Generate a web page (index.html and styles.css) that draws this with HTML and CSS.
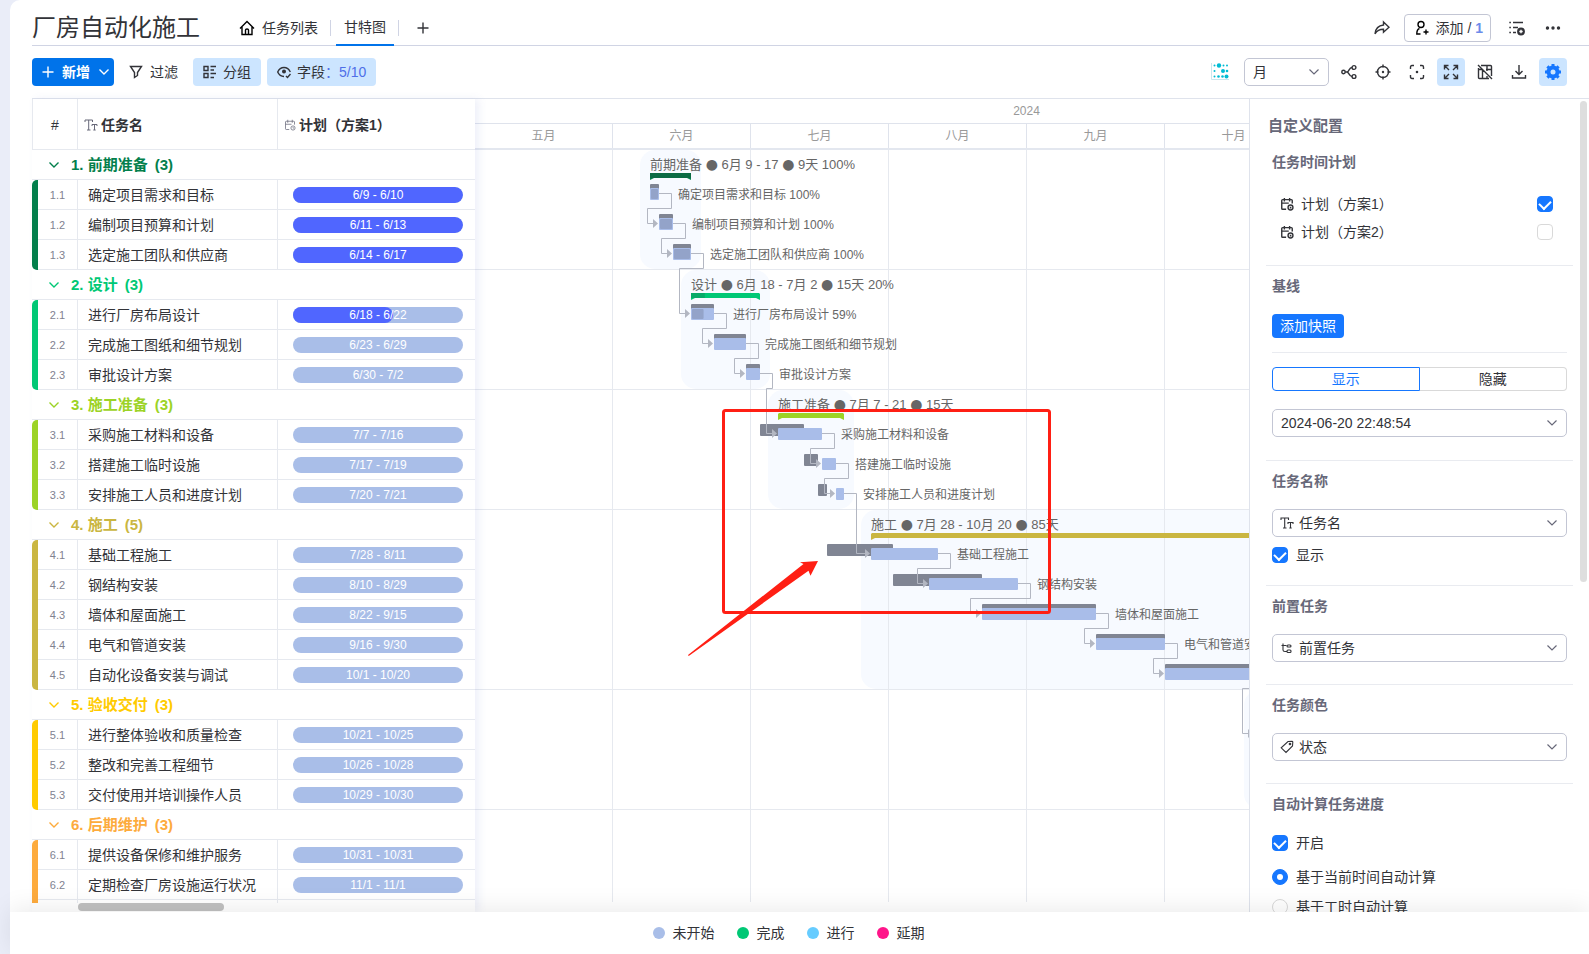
FILE: index.html
```html
<!DOCTYPE html>
<html lang="zh-CN">
<head>
<meta charset="utf-8">
<title>厂房自动化施工</title>
<link rel="stylesheet" href="styles.css">
</head>
<body>
<svg class="sprite" aria-hidden="true">
  <symbol id="i-calendar" viewBox="0 0 16 16"><path d="M7 14H3a1 1 0 0 1-1-1V4a1 1 0 0 1 1-1h10a1 1 0 0 1 1 1v3.500M2 7h8M5 1v4M11 1v4"/><circle cx="12" cy="12" r="2.800"/><path d="M12 11v1.200h1"/></symbol>
  <symbol id="i-chevron" viewBox="0 0 12 12"><path d="M1.500 3.500 6 8l4.500-4.500"/></symbol>
  <symbol id="i-text" viewBox="0 0 14 14"><path d="M1 4V2h7.500v2M4.700 2v10M3 12h3.500M8 8V6.500h5V8M10.500 6.500V12M9.300 12h2.400"/></symbol>
  <symbol id="i-plus" viewBox="0 0 12 12"><path d="M6 .5v11M.5 6h11"/></symbol>
</svg>
<div class="app">
  <header class="topbar">
    <h1 class="title">厂房自动化施工</h1>
    <nav class="tabs">
      <a class="tab" href="#list"><svg class="icon i16 dark" viewBox="0 0 16 16"><path d="M1 8.500 8 1.500l7 7M3 7v7.500h10V7M6.500 14.500V10q0-1 1.500-1t1.500 1v4.500"/></svg>任务列表</a>
      <span class="sep"></span>
      <a class="tab active" href="#gantt">甘特图</a>
      <span class="sep"></span>
      <button class="plain add-tab" aria-label="添加视图"><svg class="icon i12" ><use href="#i-plus"/></svg></button>
    </nav>
    <div class="top-actions">
      <button class="plain" aria-label="分享"><svg class="icon i16" viewBox="0 0 16 16"><path d="M9.500 2 15 7.200l-5.500 5V9.300C5.500 9.300 3 10.500 1 13.800 1.500 9 4.500 5.500 9.500 5z"/></svg></button>
      <button class="invite"><svg class="icon i16 dark" viewBox="0 0 16 16"><circle cx="7" cy="4.500" r="3"/><path d="M5.500 8.500C3.500 9 2.800 11 2.800 14H6.500M12 9.500v5M9.500 12h5"/></svg><span>添加 / <b>1</b></span></button>
      <button class="plain" aria-label="活动"><svg class="icon i16" viewBox="0 0 16 16"><path d="M4 2.500h10M4 7.500h5M4 12.500h3M.3 2.500h1.600M.3 7.500h1.600M.3 12.500h1.600"/><circle class="solid" cx="12" cy="11.500" r="3.200"/><path class="cut" d="M12 9.800v3.400M10.300 11.500h3.400"/></svg></button>
      <button class="plain" aria-label="更多"><svg class="icon i16" viewBox="0 0 16 16"><g class="solid"><circle cx="2.500" cy="8" r="1"/><circle cx="8" cy="8" r="1"/><circle cx="13.500" cy="8" r="1"/></g></svg></button>
    </div>
  </header>

  <div class="toolbar">
    <button class="btn primary"><svg class="icon i12"><use href="#i-plus"/></svg><b>新增</b><svg class="icon i12"><use href="#i-chevron"/></svg></button>
    <button class="btn filter"><svg class="icon i14" viewBox="0 0 14 14"><path d="M1.500 1.500h11L8.500 7.500v3l-3 2v-5z"/></svg>过滤</button>
    <button class="btn soft"><svg class="icon i14" viewBox="0 0 14 14"><path d="M1 1.500h4v4H1zM1 8.500h4v4H1zM7.500 1.500H13M7.500 5H11M7.500 8.500H13M7.500 12.500H11"/></svg>分组</button>
    <button class="btn soft"><svg class="icon i14" viewBox="0 0 14 14"><path d="M7 11.500C4 11.500 1.800 9.500.7 7 1.800 4.500 4 2.500 7 2.500s5.200 2 6.300 4.500M9 11l1.500 1.500 3-3.500"/><circle class="solid" cx="7" cy="6.500" r="1.300"/></svg><span>字段<i class="blue">：5/10</i></span></button>
    <div class="tools">
      <button class="tool cyan" aria-label="网格"><svg viewBox="0 0 18 18"><path class="axis" d="M.5 0v16.500H18"/><g><circle cx="3.500" cy="2.500" r="1"/><circle cx="8" cy="2.500" r="2.200"/><circle cx="12.500" cy="2.500" r="1"/><circle cx="16" cy="2.500" r="1"/><circle cx="3.500" cy="8" r="1"/><circle cx="12" cy="8" r="2"/><circle cx="16" cy="8" r="1.300"/><circle cx="3.500" cy="13.500" r="1"/><circle cx="7.500" cy="13.500" r="1.300"/><circle cx="11.500" cy="13.500" r="1.300"/><circle cx="15.500" cy="13.500" r="2"/></g></svg></button>
      <span class="select month"><select aria-label="时间刻度"><option>月</option></select><svg class="icon i12 caret"><use href="#i-chevron"/></svg></span>
      <button class="tool" aria-label="依赖"><svg class="icon i16" viewBox="0 0 16 16"><circle cx="2.500" cy="8" r="1.700"/><circle cx="13" cy="3.500" r="1.900"/><circle cx="13" cy="12.500" r="1.900"/><path d="M4.200 8H6c2 0 2-4.500 5-4.500M6 8c2 0 2 4.500 5 4.500"/></svg></button>
      <button class="tool" aria-label="今天"><svg class="icon i16" viewBox="0 0 16 16"><circle cx="8" cy="8" r="5.500"/><path d="M8 .5v3M8 12.500v3M.5 8h3M12.500 8h3"/><circle class="solid" cx="8" cy="8" r=".5"/></svg></button>
      <button class="tool" aria-label="聚焦"><svg class="icon i16" viewBox="0 0 16 16"><path d="M1.500 5V3q0-1.500 1.500-1.500h2M11 1.500h2q1.500 0 1.500 1.500v2M14.500 11v2q0 1.500-1.500 1.500h-2M5 14.500H3q-1.500 0-1.500-1.500v-2"/><circle class="solid" cx="8" cy="8" r=".6"/></svg></button>
      <button class="tool on" aria-label="全屏"><svg class="icon i16" viewBox="0 0 16 16"><path d="M1.500 5.500v-4h4M1.500 1.500 6 6M10.500 1.500h4v4M14.500 1.500 10 6M14.500 10.500v4h-4M14.500 14.500 10 10M5.500 14.500h-4v-4M1.500 14.500 6 10"/></svg></button>
      <button class="tool" aria-label="隐藏表格"><svg class="icon i16" viewBox="0 0 16 16"><path d="M4 1.500h9.500q1 0 1 1V12M12 14.500H2.500q-1 0-1-1V4M1 1l14 14M5.500 5.500v9M1.500 5.500h4M9 5.500h5.500M10 1.500V7M10 12v2.500"/></svg></button>
      <button class="tool" aria-label="下载"><svg class="icon i16" viewBox="0 0 16 16"><path d="M8 1v9.500M4.500 7 8 10.500 11.500 7M1.500 11v3h13v-3"/></svg></button>
      <button class="tool on gear" aria-label="设置"><svg viewBox="0 0 18 18"><circle cx="9" cy="9" r="5" /><path d="M9 1v16M1 9h16M3.400 3.400l11.200 11.200M14.600 3.400 3.400 14.600"/><circle class="hole" cx="9" cy="9" r="2.500"/></svg></button>
    </div>
  </div>

  <main class="main">
    <section class="grid-pane">
      <div class="grid-clip">
        <table class="grid">
          <colgroup><col class="c-bar"><col class="c-num"><col class="c-name"><col></colgroup>
          <thead><tr>
            <th colspan="2" class="num-head">#</th>
            <th><span class="head"><svg class="icon i14 grey"><use href="#i-text"/></svg>任务名</span></th>
            <th><span class="head"><svg class="icon i12 grey"><use href="#i-calendar"/></svg>计划（方案1）</span></th>
          </tr></thead>
        </table>
      </div>
      <div class="hscroll"><span></span></div>
    </section>

    <section class="chart">
      <div class="scale">
        <div class="year">2024</div>
        <div class="months"><span>五月</span><span>六月</span><span>七月</span><span>八月</span><span>九月</span><span>十月</span><span></span><span></span></div>
      </div>
      <svg class="canvas" id="canvas"></svg>
    </section>

    <aside class="panel">
      <h2>自定义配置</h2>
      <section class="first">
        <h3>任务时间计划</h3>
        <label class="plan"><svg class="icon i14"><use href="#i-calendar"/></svg>计划（方案1）<input type="checkbox" checked></label>
        <label class="plan"><svg class="icon i14"><use href="#i-calendar"/></svg>计划（方案2）<input type="checkbox"></label>
      </section>
      <section class="baseline">
        <h3>基线</h3>
        <button class="snapshot">添加快照</button>
        <hr>
        <div class="segment"><button class="active">显示</button><button>隐藏</button></div>
        <span class="select"><select aria-label="快照"><option>2024-06-20 22:48:54</option></select><svg class="icon i12 caret"><use href="#i-chevron"/></svg></span>
      </section>
      <section>
        <h3>任务名称</h3>
        <span class="select lead"><svg class="icon i14 mark"><use href="#i-text"/></svg><select aria-label="任务名称"><option>任务名</option></select><svg class="icon i12 caret"><use href="#i-chevron"/></svg></span>
        <label class="check"><input type="checkbox" checked>显示</label>
      </section>
      <section>
        <h3>前置任务</h3>
        <span class="select lead"><svg class="icon i14 mark" viewBox="0 0 14 14"><path d="M3 2.500v6.500q0 1.500 2 1.500h2M1.500 4.500h5"/><rect x="7" y="4" width="4" height="2" rx="1"/><rect x="7" y="9" width="4" height="2.500" rx="1"/></svg><select aria-label="前置任务"><option>前置任务</option></select><svg class="icon i12 caret"><use href="#i-chevron"/></svg></span>
      </section>
      <section>
        <h3>任务颜色</h3>
        <span class="select lead"><svg class="icon i14 mark" viewBox="0 0 14 14"><path d="M8 1.500l4-.3q.8 0 .8.800l-.3 4L6 12.500 1.200 7.800z"/><circle cx="10" cy="4" r=".8"/></svg><select aria-label="任务颜色"><option>状态</option></select><svg class="icon i12 caret"><use href="#i-chevron"/></svg></span>
      </section>
      <section class="auto">
        <h3>自动计算任务进度</h3>
        <label class="check"><input type="checkbox" checked>开启</label>
        <label class="check"><input type="radio" name="mode" checked>基于当前时间自动计算</label>
        <label class="check"><input type="radio" name="mode">基于工时自动计算</label>
      </section>
      <span class="vscroll"></span>
    </aside>
  </main>

  <footer class="legend">
    <span><i class="todo"></i>未开始</span><span><i class="done"></i>完成</span><span><i class="doing"></i>进行</span><span><i class="late"></i>延期</span>
  </footer>
</div>
<script src="app.js"></script>
</body>
</html>
```
FILE: app.js
```js
// start/end: chart pixels of the task; b0/b1: baseline span when it differs
const groups = [
  { name: '前期准备', color: '#037f4c', dark: '#0b6b44', span: [175, 216], done: 1, title: '前期准备 ● 6月 9 - 17 ● 9天 100%', tasks: [
    { name: '确定项目需求和目标', plan: '6/9 - 6/10', start: 175, end: 184, done: 100 },
    { name: '编制项目预算和计划', plan: '6/11 - 6/13', start: 184, end: 198, done: 100 },
    { name: '选定施工团队和供应商', plan: '6/14 - 6/17', start: 198, end: 216, done: 100 } ] },
  { name: '设计', color: '#00c875', dark: '#08ab68', span: [216, 285], done: 0.2, title: '设计 ● 6月 18 - 7月 2 ● 15天 20%', tasks: [
    { name: '进行厂房布局设计', plan: '6/18 - 6/22', start: 216, end: 239, done: 59 },
    { name: '完成施工图纸和细节规划', plan: '6/23 - 6/29', start: 239, end: 271 },
    { name: '审批设计方案', plan: '6/30 - 7/2', start: 271, end: 285 } ] },
  { name: '施工准备', color: '#9cd326', span: [303, 369], title: '施工准备 ● 7月 7 - 21 ● 15天', tasks: [
    { name: '采购施工材料和设备', plan: '7/7 - 7/16', start: 303, end: 347, b0: 285, b1: 329 },
    { name: '搭建施工临时设施', plan: '7/17 - 7/19', start: 347, end: 361, b0: 329, b1: 343 },
    { name: '安排施工人员和进度计划', plan: '7/20 - 7/21', start: 361, end: 369, b0: 343, b1: 352 } ] },
  { name: '施工', color: '#cab641', span: [396, 779], title: '施工 ● 7月 28 - 10月 20 ● 85天', tasks: [
    { name: '基础工程施工', plan: '7/28 - 8/11', start: 396, end: 463, b0: 352, b1: 418 },
    { name: '钢结构安装', plan: '8/10 - 8/29', start: 454, end: 543, b0: 418, b1: 507 },
    { name: '墙体和屋面施工', plan: '8/22 - 9/15', start: 507, end: 621 },
    { name: '电气和管道安装', plan: '9/16 - 9/30', start: 621, end: 690 },
    { name: '自动化设备安装与调试', plan: '10/1 - 10/20', start: 690, end: 779 } ] },
  { name: '验收交付', color: '#ffcb00', span: [779, 823], tasks: [
    { name: '进行整体验收和质量检查', plan: '10/21 - 10/25', start: 779, end: 801 },
    { name: '整改和完善工程细节', plan: '10/26 - 10/28', start: 801, end: 815 },
    { name: '交付使用并培训操作人员', plan: '10/29 - 10/30', start: 815, end: 823 } ] },
  { name: '后期维护', color: '#fdab3d', span: [823, 832], tasks: [
    { name: '提供设备保修和维护服务', plan: '10/31 - 10/31', start: 823, end: 828 },
    { name: '定期检查厂房设施运行状况', plan: '11/1 - 11/1', start: 828, end: 832 },
    { start: 832, end: 836 } ] }
];
const ROW = 30;

const table = document.querySelector('.grid');
groups.forEach((g, gi) => {
  const body = document.createElement('tbody');
  body.style.color = g.color;
  let html = `<tr class="group"><td colspan="4"><span><svg class="icon i12"><use href="#i-chevron"/></svg>${gi + 1}. ${g.name}<em>(${g.tasks.length})</em></span></td></tr>`;
  g.tasks.forEach((t, ti) => {
    const bar = ti ? '' : `<td class="bar" rowspan="${g.tasks.length}"></td>`;
    html += t.name
      ? `<tr>${bar}<td class="num">${gi + 1}.${ti + 1}</td><td class="name">${t.name}</td><td class="when"><span class="pill"><i style="width:${t.done || 0}%"></i><b>${t.plan}</b></span></td></tr>`
      : `<tr>${bar}<td></td><td></td><td></td></tr>`;
  });
  body.innerHTML = html;
  table.append(body);
});

const CHART_END = 774; // tasks starting past this are outside the visible range
let under = '', shapes = '', links = '', labels = '', row = 0, prev = null;
groups.forEach(g => {
  const top = row * ROW, height = (g.tasks.length + 1) * ROW, [s, e] = g.span;
  under += `<rect class="zone" x="${s - 10}" y="${top}" width="${e - s + 20}" height="${height - 1}" rx="15"/>`;
  under += `<path class="line" d="M0 ${top + height - 0.5}H2000"/>`;
  if (g.title) labels += `<text class="summary" x="${s}" y="${top + 19}">${g.title.replace(/●/g, '<tspan class="dot">●</tspan>')}</text>`;
  const y = top + 23;
  shapes += `<path fill="${g.color}" d="M${s + 1} ${y}H${e - 1}l1 1v6l-4 -2H${s + 4}l-4 2v-6z"/>`;
  if (g.done) shapes += `<rect fill="${g.dark}" x="${s}" y="${y}" width="${(e - s) * g.done}" height="5"/>`;
  row++;
  g.tasks.forEach(t => {
    const ty = row * ROW, b0 = t.b0 ?? t.start, b1 = t.b1 ?? t.end;
    shapes += `<rect class="base" x="${b0}" y="${ty + 4}" width="${b1 - b0}" height="12" rx="1"/>`;
    shapes += `<rect class="task" x="${t.start}" y="${ty + 8}" width="${t.end - t.start}" height="12" rx="1"/>`;
    if (t.done) shapes += `<rect class="progress" x="${t.start + 1}" y="${ty + 9}" width="${(t.end - t.start) * t.done / 100 - 2}" height="10" rx="1"/>`;
    if (t.end < CHART_END) labels += `<text class="label" x="${t.end + 19}" y="${ty + 19}">${t.name}${t.done ? ' ' + t.done + '%' : ''}</text>`;
    if (prev) {
      const out = prev.end + 12.5, inn = t.start - 11.5, y0 = prev.y + 13.5, y1 = ty + 13.5;
      const mid = prev.y + 28.5;
      links += inn > out ? `<path d="M${prev.end} ${y0}H${out}V${y1}H${t.start - 5}"/>`
        : `<path d="M${prev.end} ${y0}H${out}V${mid}H${inn}V${y1}H${t.start - 5}"/>`;
      links += `<path class="tip" d="M${t.start - 6} ${y1 - 4.5}l5 4.5l-5 4.5z"/>`;
    }
    prev = { end: t.end, y: ty };
    row++;
  });
});
let months = '';
for (let x = 137.5; x < 1800; x += 138) months += `<path class="line" d="M${x} 0V752"/>`;
document.getElementById('canvas').innerHTML =
  `<g>${under}${months}</g><g>${shapes}</g><g class="links">${links}</g><g>${labels}</g>
  <g class="callout"><rect x="248.500" y="260.500" width="326" height="202" rx="2"/>
  <path d="M343 411L325 412.300L328.500 414L213 505L213.700 506L333.500 420.700L335.500 425.700Z"/></g>`;
```
FILE: styles.css
```css
* { box-sizing: border-box; }
body { margin: 0; background: #eaedf8; color: #323338; overflow: hidden; font: 14px/20px "Liberation Sans", "Noto Sans CJK SC", sans-serif; }
button, select, input { font: inherit; color: inherit; margin: 0; }
button { padding: 0; border: 0; background: none; cursor: pointer; }
h1, h2, h3 { margin: 0; }
i, em { font-style: normal; }
.sprite { display: none; }
.icon { fill: none; stroke: currentColor; stroke-width: 1.4; flex: none; }
.icon .solid { fill: currentColor; }
.icon .cut { stroke: #fff; }
.i12 { width: 12px; height: 12px; }
.i14 { width: 14px; height: 14px; }
.i16 { width: 16px; height: 16px; }
.grey { color: #676879; stroke-width: 1; }
.dark { color: #000; }

.app { height: 100vh; margin-left: 10px; background: #fff; border-radius: 10px 0 0 0; display: flex; flex-direction: column; }
.topbar { height: 46px; flex: none; margin-left: 22px; padding-right: 28px; border-bottom: 1px solid #d0d4e4; display: flex; align-items: center; }
.title { font-size: 24px; line-height: 32px; font-weight: 400; padding-top: 12px; height: 46px; }
.tabs { display: flex; align-items: center; height: 46px; padding-top: 11px; margin-left: 33px; }
.tab { display: flex; align-items: center; gap: 7px; height: 35px; padding: 0 6px; color: inherit; text-decoration: none; line-height: 34px; }
.tab:first-child { padding-right: 12px; }
.tab.active { margin: 0 4px 0 5px; padding: 0 8px; border-bottom: 2px solid #0073ea; }
.sep { width: 1px; height: 16px; background: #d0d4e4; }
.plain { display: flex; }
.add-tab { margin-left: 18px; }
.top-actions { margin-left: auto; padding-top: 10px; display: flex; align-items: center; }
.invite { display: flex; align-items: center; gap: 6px; height: 28px; padding: 0 7px 0 9px; margin: 0 18px 0 14px; border: 1px solid #c3c6d4; border-radius: 4px; }
.invite b { color: #6c8bea; }
.top-actions .plain:last-child { margin-left: 20px; }

.toolbar { height: 52px; flex: none; padding: 0 22px; display: flex; align-items: center; }
.btn { display: flex; align-items: center; height: 28px; border-radius: 4px; gap: 7px; padding: 0 9px; }
.btn.primary { background: #0073ea; color: #fff; padding: 0 4px 0 10px; gap: 8px; }
.btn.filter { padding: 0 15px; }
.btn.soft { background: #cce5ff; gap: 6px; padding: 0 10px; }
.btn.soft + .soft { margin-left: 6px; }
.blue { color: #4f6fe8; }
.tools { margin-left: auto; display: flex; align-items: center; gap: 6px; }
.tool { width: 28px; height: 28px; border-radius: 4px; display: flex; align-items: center; justify-content: center; }
.tool.on { background: #cce5ff; }
.cyan svg { width: 18px; height: 18px; fill: #00bcd4; }
.cyan .axis { fill: none; stroke: #c9e6ee; }
.cyan { margin-right: 4px; }
.gear svg { width: 18px; height: 18px; fill: #1677ff; stroke: #1677ff; stroke-width: 3; }
.gear .hole { fill: #cce5ff; stroke: none; }
.select { position: relative; display: flex; align-items: center; }
.select select { appearance: none; width: 100%; height: 28px; padding: 0 28px 0 8px; border: 1px solid #c3c6d4; border-radius: 5px; background: #fff; }
.select.month { width: 85px; }
.select.lead select { padding-left: 26px; }
.select .caret { position: absolute; right: 9px; color: #676879; stroke-width: 1.2; pointer-events: none; }
.select .mark { position: absolute; left: 8px; stroke-width: 1.1; pointer-events: none; }

.main { flex: 1; min-height: 0; margin-left: 22px; border-top: 1px solid #dfe3ec; display: flex; }
.grid-pane { flex: 0 0 443px; display: flex; flex-direction: column; position: relative; z-index: 1; background: #fff; box-shadow: 4px 0 8px rgba(90, 110, 200, .1); }
.grid-clip { flex: 1; min-height: 0; overflow: hidden; }
.grid { width: 100%; table-layout: fixed; border-spacing: 0; }
.c-bar { width: 6px; }
.c-num { width: 40px; }
.c-name { width: 200px; }
.grid th, .grid td { padding: 0; border-right: 1px solid #e6e9ef; border-bottom: 1px solid #e6e9ef; }
.grid th:last-child, .grid td:last-child { border-right: 0; }
.grid th { height: 51px; padding-top: 2px; text-align: left; color: #323338; }
.grid .num-head { border-left: 1px solid #e6e9ef; text-align: center; font-weight: 400; }
.head { display: flex; align-items: center; gap: 3px; padding-left: 6px; }
.grid td { height: 30px; }
.group span { display: flex; align-items: center; padding-left: 16px; font-size: 15px; font-weight: 700; }
.group .icon { margin-right: 11px; }
.group em { margin-left: 7px; }
.grid .bar { border-right: 0; border-bottom: 0; background: currentColor; border-radius: 5px 0 0 5px; }
.grid .num { text-align: center; font-size: 11px; color: #808290; }
.grid .name { padding-left: 10px; color: #323338; white-space: nowrap; }
.grid .when { padding: 0 12px 0 15px; }
.pill { position: relative; display: block; height: 16px; border-radius: 8px; background: #a9bee8; overflow: hidden; color: #fff; text-align: center; font-size: 12px; line-height: 16px; }
.pill i { position: absolute; left: 0; top: 0; height: 16px; border-radius: 0 8px 8px 0; background: #5066ff; }
.pill b { position: relative; font-weight: 400; }
.hscroll { height: 9px; flex: none; padding-left: 46px; }
.hscroll span { display: block; width: 146px; height: 8px; border-radius: 4px; background: #c1c1c1; }

.chart { flex: 1; min-width: 0; overflow: hidden; display: flex; flex-direction: column; }
.scale { width: 1103px; flex: none; color: #999; font-size: 12px; text-align: center; }
.year { height: 25px; line-height: 24px; border-bottom: 1px solid #dfe3ec; }
.months { height: 26px; line-height: 24px; display: grid; grid-template-columns: repeat(8, 138px); border-bottom: 2px solid #e3e7ef; }
.months span { border-right: 1px solid #dfe3ec; }
.canvas { flex: 1; min-height: 0; width: 100%; display: block; }
.zone { fill: #f7faff; }
.line { stroke: #e6e9ef; }
.base { fill: #808593; }
.task { fill: #a9bde9; }
.progress { fill: #93a3c9; }
.links path { fill: none; stroke: #b3b7c2; }
.links .tip { fill: #b3b7c2; stroke: none; }
.canvas text { fill: #666; }
.summary { font-size: 13px; }
.dot { font: 14px "DejaVu Sans", sans-serif; }
.label { font-size: 12px; }
.callout rect { fill: none; stroke: #ff1f14; stroke-width: 3; }
.callout path { fill: #ff1f14; }

.panel { flex: 0 0 340px; position: relative; overflow: hidden; border-left: 1px solid #dfe3ec; padding: 17px 16px 0; }
.panel h2 { font-size: 15px; line-height: 20px; padding-left: 2px; color: #676879; }
.panel h3 { font-size: 14px; line-height: 20px; margin-bottom: 18px; color: #676879; }
.panel section { padding: 10px 6px 22px; border-top: 1px solid #e9ebf0; }
.panel .first { border: 0; padding: 16px 6px 19px; }
.panel .baseline { padding-bottom: 23px; }
.plan { display: flex; align-items: center; gap: 7px; height: 28px; padding: 0 14px 0 8px; }
.plan .icon { stroke-width: 1.6; }
.plan input { margin-left: auto; }
.panel input { appearance: none; flex: none; width: 16px; height: 16px; border: 1px solid #d9d9d9; border-radius: 4px; background: #fff; display: flex; align-items: center; justify-content: center; }
.panel input[type=radio] { border-radius: 50%; }
.panel input:checked { background: #1677ff; border-color: #1677ff; }
.panel input[type=checkbox]:checked::after { content: ""; width: 6px; height: 9px; margin-bottom: 2px; border: solid #fff; border-width: 0 2px 2px 0; transform: rotate(45deg); }
.panel input[type=radio]:checked::after { content: ""; width: 6px; height: 6px; border-radius: 50%; background: #fff; }
.snapshot { display: block; height: 24px; width: 72px; border-radius: 4px; background: #1677ff; color: #fff; }
.panel hr { margin: 14px 0; border: 0; border-top: 1px solid #e9ebf0; }
.segment { display: grid; grid-template-columns: 1fr 1fr; margin-bottom: 18px; }
.segment button { height: 24px; border: 1px solid #d9d9d9; border-left: 0; border-radius: 0 4px 4px 0; }
.segment .active { border: 1px solid #1677ff; border-radius: 4px 0 0 4px; color: #1677ff; }
.check { display: flex; align-items: center; gap: 8px; height: 16px; margin-top: 10px; }
.auto .check { margin-top: 14px; }
.auto h3 + .check { margin: 21px 0 18px; }
.vscroll { position: absolute; top: 2px; right: 2px; width: 7px; height: 481px; border-radius: 4px; background: #dedede; }

.legend { flex: none; height: 42px; padding-right: 22px; position: relative; z-index: 2; background: #fff; box-shadow: 0 -4px 24px rgba(0, 0, 0, .08); display: flex; justify-content: center; gap: 22px; align-items: center; }
.legend span { display: flex; align-items: center; gap: 8px; }
.legend i { width: 12px; height: 12px; border-radius: 50%; }
.todo { background: #a9bee8; }
.done { background: #00c875; }
.doing { background: #66ccff; }
.late { background: #ff158a; }
```
